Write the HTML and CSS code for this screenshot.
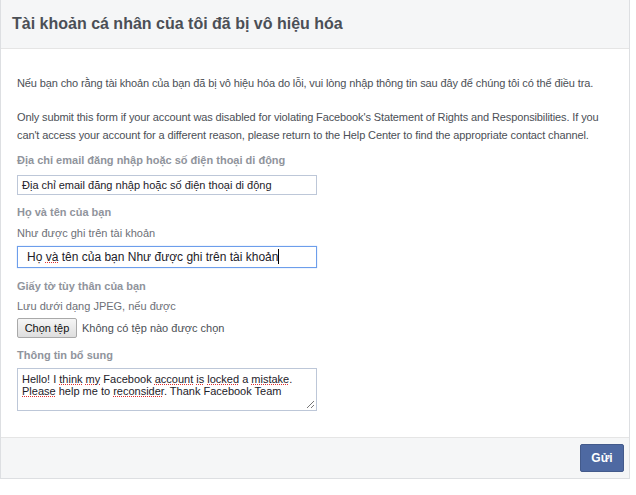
FILE: index.html
```html
<!DOCTYPE html>
<html lang="vi">
<head>
<meta charset="utf-8">
<title>Tài khoản cá nhân của tôi đã bị vô hiệu hóa</title>
<link rel="stylesheet" href="styles.css">
</head>
<body>
<div class="panel">
  <div class="header">
    <h1 class="title">Tài khoản cá nhân của tôi đã bị vô hiệu hóa</h1>
  </div>
  <div class="content">
    <p class="intro">Nếu bạn cho rằng tài khoản của bạn đã bị vô hiệu hóa do lỗi, vui lòng nhập thông tin sau đây để chúng tôi có thể điều tra.</p>
    <p class="notice">Only submit this form if your account was disabled for violating Facebook's Statement of Rights and Responsibilities. If you can't access your account for a different reason, please return to the Help Center to find the appropriate contact channel.</p>

    <div class="label l1">Địa chỉ email đăng nhập hoặc số điện thoại di động</div>
    <div class="input i1">Địa chỉ email đăng nhập hoặc số điện thoại di động</div>

    <div class="label l2">Họ và tên của bạn</div>
    <div class="hint h2">Như được ghi trên tài khoản</div>
    <div class="input i2 focus">Họ <span class="sp">và</span> tên của bạn Như được ghi trên tài khoản<span class="caret"></span></div>

    <div class="label l3">Giấy tờ tùy thân của bạn</div>
    <div class="hint h3">Lưu dưới dạng JPEG, nếu được</div>
    <div class="filerow">
      <span class="filebtn">Chọn tệp</span>
      <span class="filetext">Không có tệp nào được chọn</span>
    </div>

    <div class="label l4">Thông tin bổ sung</div>
    <div class="textarea">Hello! I <span class="sp">think</span> <span class="sp">my</span> Facebook <span class="sp">account</span> <span class="sp">is</span> <span class="sp">locked</span> a <span class="sp">mistake</span>.<br><span class="sp">Please</span> help me to <span class="sp">reconsider</span>. Thank Facebook Team
      <svg class="grip" width="9" height="9" viewBox="0 0 9 9"><path d="M8 1 L1 8 M8 5 L5 8" stroke="#777" stroke-width="1" fill="none"/></svg>
    </div>
  </div>
  <div class="footer">
    <span class="submit">Gửi</span>
  </div>
</div>
</body>
</html>
```
FILE: styles.css
```css
html, body {
  margin: 0;
  padding: 0;
  background: #fff;
}
body {
  font-family: "Liberation Sans", Arial, sans-serif;
  font-size: 11px;
  color: #4b4f56;
}
.panel {
  width: 628px;
  border-left: 1px solid #dddfe2;
  border-right: 1px solid #dddfe2;
  border-bottom: 1px solid #dddfe2;
}
.header {
  height: 48px;
  background: #f5f6f7;
  border-bottom: 1px solid #e5e5e5;
  display: flex;
  align-items: center;
  padding-left: 11px;
}
.title {
  margin: 0;
  font-size: 16px;
  font-weight: bold;
  color: #4b4f56;
}
.content {
  padding: 25px 12px 26px 16px;
}
.intro {
  margin: 0;
  line-height: 18px;
  letter-spacing: -0.12px;
}
.notice {
  margin: 16px 0 0 0;
  line-height: 18px;
  letter-spacing: -0.12px;
}
.label {
  font-weight: bold;
  color: #90949c;
  line-height: 16px;
}
.hint {
  color: #6d7077;
  line-height: 16px;
}
.l1 { margin-top: 8px; }
.l2 { margin-top: 9px; }
.l3 { margin-top: 10px; }
.l4 { margin-top: 9px; }
.h2 { margin-top: 5px; }
.h3 { margin-top: 4px; }
.input {
  box-sizing: border-box;
  width: 300px;
  border: 1px solid #bdc7d8;
  background: #fff;
  color: #1d2129;
  white-space: nowrap;
}
.i1 {
  margin-top: 7px;
  height: 20px;
  line-height: 18px;
  padding-left: 4px;
}
.i2 {
  margin-top: 5px;
  height: 22px;
  line-height: 20px;
  padding-left: 9px;
  font-size: 12px;
}
.focus {
  border-color: #6d9eeb;
  box-shadow: 0 0 1px #9fc0f5;
}
.sp {
  text-decoration: underline dotted #e03030;
  text-decoration-thickness: 1px;
  text-underline-offset: 1px;
}
.caret {
  display: inline-block;
  width: 1px;
  height: 15px;
  background: #000;
  vertical-align: -3px;
}
.filerow {
  margin-top: 4px;
  display: flex;
  align-items: center;
  gap: 5px;
}
.filebtn {
  box-sizing: border-box;
  height: 20px;
  width: 60px;
  display: flex;
  align-items: center;
  justify-content: center;
  border: 1px solid #a9a9a9;
  border-radius: 2px;
  background: linear-gradient(#f6f6f6, #dedede);
  color: #111;
}
.filetext {
  color: #4b4f56;
}
.textarea {
  position: relative;
  box-sizing: border-box;
  margin-top: 5px;
  width: 300px;
  height: 43px;
  border: 1px solid #bdc7d8;
  padding: 4px 4px;
  line-height: 12px;
  color: #1d2129;
}
.grip {
  position: absolute;
  right: 1px;
  bottom: 1px;
}
.footer {
  box-sizing: border-box;
  height: 41px;
  background: #f5f6f7;
  border-top: 1px solid #e5e5e5;
  display: flex;
  justify-content: flex-end;
  align-items: center;
  padding-right: 5px;
}
.submit {
  box-sizing: border-box;
  width: 44px;
  height: 28px;
  display: flex;
  align-items: center;
  justify-content: center;
  background: #4e69a2;
  border: 1px solid #435a8b;
  border-radius: 2px;
  color: #fff;
  font-weight: bold;
  font-size: 12px;
}
```
